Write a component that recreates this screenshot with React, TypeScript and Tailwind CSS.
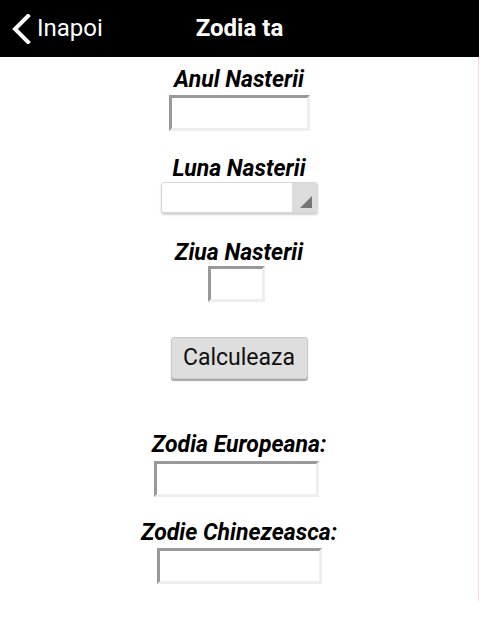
export default function App() {
  const label =
    "font-['Roboto',sans-serif] text-[23px] leading-[26px] font-bold italic text-black"
  const inset =
    "h-[36px] border-[3px] border-t-[#999999] border-l-[#999999] border-b-[#eeeeee] border-r-[#eeeeee] bg-white"

  return (
    <div className="w-[479px] bg-white font-['Roboto',sans-serif]">
      {/* Top bar */}
      <header className="grid h-[57px] grid-cols-[1fr_auto_1fr] items-center bg-black text-white">
        <div className="flex items-center pl-[12px]">
          <svg width="20" height="30" viewBox="0 0 20 30" className="shrink-0">
            <polyline
              points="16,2 3,15 16,28"
              fill="none"
              stroke="white"
              strokeWidth="4"
              strokeLinecap="square"
            />
          </svg>
          <span className="ml-[5px] pb-[1px] text-[24px] leading-[26px]">Inapoi</span>
        </div>
        <h1 className="pb-[1px] text-[24px] leading-[26px] font-bold">Zodia ta</h1>
        <div />
      </header>

      {/* Form */}
      <main className="flex flex-col items-center border-r border-[#f6dada] pt-[10px] pb-[17px]">
        <p className={label}>Anul Nasterii</p>
        <div className={"mt-[2px] w-[141px] " + inset} />

        <p className={"mt-[25px] " + label}>Luna Nasterii</p>
        <div className="flex h-[31px] w-[157px] overflow-hidden rounded-[3px] border border-[#d6d6d6] bg-white shadow-[0_2px_2px_rgba(0,0,0,0.18)]">
          <div className="flex-1" />
          <div className="flex w-[25px] items-end justify-end bg-[#dcdcdc] pr-[5px] pb-[4px]">
            <svg width="12" height="12" viewBox="0 0 12 12">
              <polygon points="12,0 12,12 0,12" fill="#757575" />
            </svg>
          </div>
        </div>

        <p className={"mt-[27px] " + label}>Ziua Nasterii</p>
        <div className={"mr-[6px] w-[57px] " + inset} />

        <button className="mt-[35px] h-[42px] w-[137px] rounded-[3px] border border-[#c9c9c9] bg-[#dedede] text-[23px] leading-[26px] text-[#111] shadow-[0_2px_1px_rgba(0,0,0,0.35)]">
          Calculeaza
        </button>

        <p className={"mt-[53px] " + label}>Zodia Europeana:</p>
        <div className={"mt-[3px] mr-[6px] w-[165px] " + inset} />

        <p className={"mt-[23px] " + label}>Zodie Chinezeasca:</p>
        <div className={"mt-[2px] w-[165px] " + inset} />
      </main>
    </div>
  )
}
